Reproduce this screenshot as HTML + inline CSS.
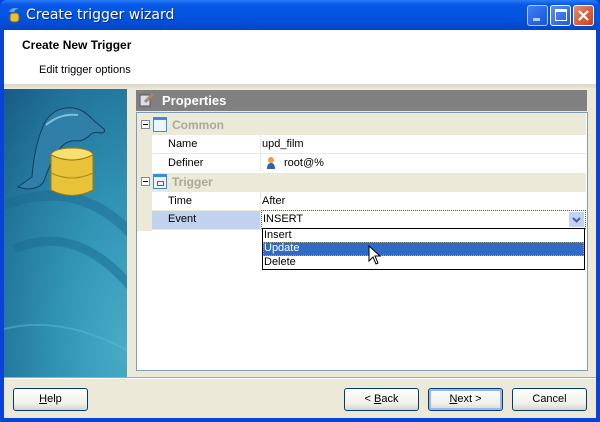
<!DOCTYPE html>
<html><head><style>
*{margin:0;padding:0;box-sizing:border-box}
body{width:600px;height:422px;overflow:hidden;font-family:Tahoma,"Liberation Sans",sans-serif;font-size:11px;position:relative;background:#0842d6}
.abs{position:absolute}
.tb{left:0;top:0;width:600px;height:30px;background:linear-gradient(#2a7cf6 0,#0858e8 15%,#0353e0 60%,#0446c8 100%);border-radius:7px 7px 0 0}
.title{left:26px;top:7px;color:#fff;font-size:14px;text-shadow:1px 1px #0a2a80;font-family:"DejaVu Sans","Liberation Sans",sans-serif}
.cb{top:5px;width:21px;height:21px;border:1px solid #fff;border-radius:3px;background:linear-gradient(135deg,#5d8ff5,#2259e0)}
.body{left:4px;top:30px;width:592px;height:388px;background:#ece9d8}
.hdr{left:4px;top:30px;width:592px;height:54px;background:#fff}
.t{white-space:nowrap}
.btn{height:23px;width:75px;border:1px solid #003c74;border-radius:3px;background:linear-gradient(#fff,#f0efe8 70%,#d8d5c8);text-align:center;line-height:21px;font-size:11px}
.row{position:absolute;left:137px;width:449px;height:19px}
</style></head><body>
<div class="abs tb"></div>
<svg class="abs" style="left:6px;top:6px" width="16" height="18"><path d="M3 6 Q6 0 13 3 Q9 3 8 6Z" fill="#6aa9d8"/><rect x="4" y="7" width="9" height="9" rx="3" fill="#e8c030" stroke="#8a6a10"/></svg>
<div class="abs title">Create trigger wizard</div>
<div class="abs cb" style="left:527px;opacity:.7"><div class="abs" style="left:5px;top:12px;width:7px;height:3px;background:#fff"></div></div>
<div class="abs cb" style="left:550px"><div class="abs" style="left:4px;top:3px;width:12px;height:12px;border:1px solid #fff;border-top-width:3px"></div></div>
<div class="abs cb" style="left:573px;background:linear-gradient(135deg,#e88a6a,#c8401a)"><svg width="19" height="19"><path d="M5 5L14 14M14 5L5 14" stroke="#fff" stroke-width="2.2"/></svg></div>
<div class="abs body"></div>
<div class="abs hdr"></div>
<div class="abs t" style="left:22px;top:38px;font-weight:bold;font-size:12px">Create New Trigger</div>
<div class="abs t" style="left:39px;top:64px">Edit trigger options</div>
<div class="abs" style="left:4px;top:84px;width:592px;height:5px;background:linear-gradient(#d8d6cc,#ece9d8)"></div>
<div class="abs" style="left:4px;top:89px;width:123px;height:288px;background:radial-gradient(ellipse at 100% 90%,#48acc8 0,#3194b5 40%,#23759c 75%,#175b85 100%);overflow:hidden">
<svg width="123" height="288">
<path d="M-10 120 Q80 80 140 160" stroke="#1c6a90" stroke-width="10" fill="none" opacity=".5"/>
<path d="M10 160 Q80 130 140 215" stroke="#1a6a92" stroke-width="9" fill="none" opacity=".5"/>
<path d="M0 240 Q60 225 130 265" stroke="#5bb8d4" stroke-width="2" fill="none" opacity=".5"/>
<path d="M14 98 Q22 92 28 88 Q30 60 38 40 Q42 28 52 22 Q70 14 84 26 Q92 34 100 40 Q102 44 96 44 Q90 42 86 46 Q80 52 74 52 Q62 50 54 62 Q46 74 40 92 Q36 100 22 100Z" fill="#2f7fa8" stroke="#123e5c"/>
<path d="M42 36 Q56 24 74 26" stroke="#7ec0dc" stroke-width="2" fill="none"/>
<ellipse cx="68" cy="66" rx="21" ry="7" fill="#f7e070" stroke="#9a7a10"/>
<path d="M47 66 V101 Q68 112 89 101 V66 Q68 76 47 66Z" fill="#e8c238" stroke="#9a7a10"/>
<path d="M47 84 Q68 94 89 84" stroke="#a88a18" fill="none"/>
</svg></div>
<div class="abs" style="left:136px;top:90px;width:451px;height:21px;background:#808080"></div>
<svg class="abs" style="left:139px;top:92px" width="16" height="16"><rect x="1" y="3" width="10" height="11" fill="#dde" stroke="#556"/><path d="M6 10 L14 2" stroke="#a86" stroke-width="3"/></svg>
<div class="abs t" style="left:162px;top:93px;color:#fff;font-weight:bold;font-size:13px;font-family:'Liberation Sans',sans-serif">Properties</div>
<div class="abs" style="left:136px;top:112px;width:452px;height:259px;background:#fff;border:1px solid #7f9db9"></div>
<div class="abs" style="left:137px;top:113px;width:15px;height:118px;background:#ebe9d8"></div>
<div class="row" style="top:116px;background:#ebe9d8"></div>
<div class="row" style="top:173px;background:#ebe9d8"></div>
<div class="abs" style="left:137px;top:113px;width:449px;height:3px;background:#ebe9d8"></div>
<div class="abs" style="left:260px;top:135px;width:1px;height:36px;background:#ebe9d8"></div>
<div class="abs" style="left:260px;top:192px;width:1px;height:36px;background:#ebe9d8"></div>
<div class="abs" style="left:152px;top:153px;width:434px;height:1px;background:#ebe9d8"></div>
<div class="abs" style="left:152px;top:210px;width:434px;height:1px;background:#ebe9d8"></div>
<div class="abs" style="left:152px;top:229px;width:434px;height:1px;background:#ebe9d8"></div>
<div class="abs" style="left:141px;top:120px;width:9px;height:9px;border:1px solid #888;background:#fff"><div class="abs" style="left:1px;top:3px;width:5px;height:1px;background:#000"></div></div>
<div class="abs" style="left:141px;top:177px;width:9px;height:9px;border:1px solid #888;background:#fff"><div class="abs" style="left:1px;top:3px;width:5px;height:1px;background:#000"></div></div>
<div class="abs" style="left:153px;top:117px;width:14px;height:15px;border:1px solid #3a8ae0;border-top-width:3px;background:#eef4fc"></div>
<div class="abs" style="left:153px;top:174px;width:14px;height:15px;border:1px solid #3a8ae0;border-top-width:3px;background:#eef4fc"><div class="abs" style="left:3px;top:4px;width:7px;height:5px;border:1px solid #c33"></div></div>
<div class="abs t" style="left:172px;top:118px;color:#aca899;font-weight:bold;font-size:12px">Common</div>
<div class="abs t" style="left:172px;top:175px;color:#aca899;font-weight:bold;font-size:12px">Trigger</div>
<div class="abs t" style="left:168px;top:138px">Name</div>
<div class="abs t" style="left:262px;top:138px">upd_film</div>
<div class="abs t" style="left:168px;top:157px">Definer</div>
<svg class="abs" style="left:266px;top:156px" width="10" height="13"><circle cx="5" cy="4" r="3" fill="#e8a040"/><path d="M1 13 Q1 7 5 7 Q9 7 9 13Z" fill="#3060b0"/></svg>
<div class="abs t" style="left:284px;top:157px">root@%</div>
<div class="abs t" style="left:168px;top:195px">Time</div>
<div class="abs t" style="left:262px;top:195px">After</div>
<div class="abs" style="left:152px;top:211px;width:108px;height:18px;background:#c1d2ee"></div>
<div class="abs t" style="left:168px;top:213px">Event</div>
<div class="abs" style="left:261px;top:210px;width:325px;height:19px;border:1px dotted #666"></div>
<div class="abs t" style="left:263px;top:213px">INSERT</div>
<div class="abs" style="left:569px;top:212px;width:15px;height:15px;background:#c1d3fb"><svg width="15" height="15"><path d="M4 6L7.5 9.5L11 6" stroke="#4d6185" stroke-width="2" fill="none"/></svg></div>
<div class="abs" style="left:262px;top:228px;width:323px;height:42px;border:1px solid #000;background:#fff"></div>
<div class="abs" style="left:263px;top:242px;width:321px;height:14px;background:#316ac5;border:1px dotted #c8a040"></div>
<div class="abs t" style="left:264px;top:229px">Insert</div>
<div class="abs t" style="left:264px;top:242px;color:#fff">Update</div>
<div class="abs t" style="left:264px;top:256px">Delete</div>
<svg class="abs" style="left:368px;top:245px" width="14" height="22"><path d="M1 1V16L5 12L8 19L10 18L7 11H12Z" fill="#fff" stroke="#000"/></svg>
<div class="abs" style="left:4px;top:377px;width:592px;height:1px;background:#aca899"></div>
<div class="abs" style="left:4px;top:378px;width:592px;height:1px;background:#fff"></div>
<div class="abs btn" style="left:13px;top:388px"><u>H</u>elp</div>
<div class="abs btn" style="left:344px;top:388px">&lt; <u>B</u>ack</div>
<div class="abs btn" style="left:428px;top:388px;box-shadow:inset 0 0 0 2px #9ab8ec"><u>N</u>ext &gt;</div>
<div class="abs btn" style="left:512px;top:388px">Cancel</div>
</body></html>
